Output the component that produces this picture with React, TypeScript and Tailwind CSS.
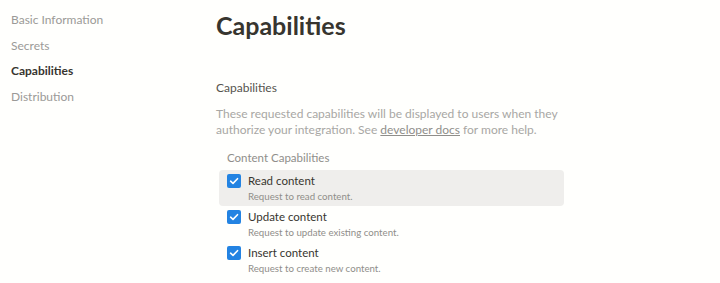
import React from "react";

function Check() {
  return (
    <div className="w-[14px] h-[14px] rounded-[2px] bg-[#2383e2] flex items-center justify-center shrink-0 mt-[1px]">
      <svg width="10" height="10" viewBox="0 0 10 10" fill="none">
        <path d="M1.6 5.2 L4 7.4 L8.5 2.7" stroke="white" strokeWidth="1.6" strokeLinecap="round" strokeLinejoin="round" />
      </svg>
    </div>
  );
}

const items = [
  { t: "Read content", d: "Request to read content.", hl: true },
  { t: "Update content", d: "Request to update existing content.", hl: false },
  { t: "Insert content", d: "Request to create new content.", hl: false },
];

export default function App() {
  return (
    <div className="w-[720px] h-[283px] bg-[#fffffd] flex overflow-hidden" style={{ fontFamily: 'Lato, "Noto Sans", sans-serif' }}>
      <div className="w-[216px] shrink-0 pl-[11px] pt-[11px] flex flex-col gap-[7.7px] text-[12px] leading-[18px] text-[#9b9a97]">
        <div>Basic Information</div>
        <div>Secrets</div>
        <div className="text-[#37352f] font-bold">Capabilities</div>
        <div>Distribution</div>
      </div>
      <div className="flex-1 pt-[8px]">
        <h1 className="text-[25px] leading-[34px] font-bold text-[#37352f]">Capabilities</h1>
        <div className="mt-[37px] text-[12px] leading-[18px] text-[#55534e]">Capabilities</div>
        <p className="mt-[9px] text-[12px] leading-[16px] text-[#a8a7a4] w-[350px]">
          These requested capabilities will be displayed to users when they authorize your integration. See{" "}
          <span className="underline text-[#8f8e8a]">developer docs</span> for more help.
        </p>
        <div className="mt-[13px] ml-[11px] text-[11.5px] leading-[14px] text-[#8f8e8a]">Content Capabilities</div>
        <div className="mt-[5px] ml-[3px] w-[345px] flex flex-col">
          {items.map((it) => (
            <div key={it.t} className={`flex gap-[7px] px-[8px] py-[3px] rounded-[4px] ${it.hl ? "bg-[#efeeec]" : ""}`}>
              <Check />
              <div>
                <div className="text-[11.5px] leading-[16px] text-[#37352f]">{it.t}</div>
                <div className="text-[9.7px] leading-[14px] text-[#8f8e8a]">{it.d}</div>
              </div>
            </div>
          ))}
        </div>
      </div>
    </div>
  );
}
